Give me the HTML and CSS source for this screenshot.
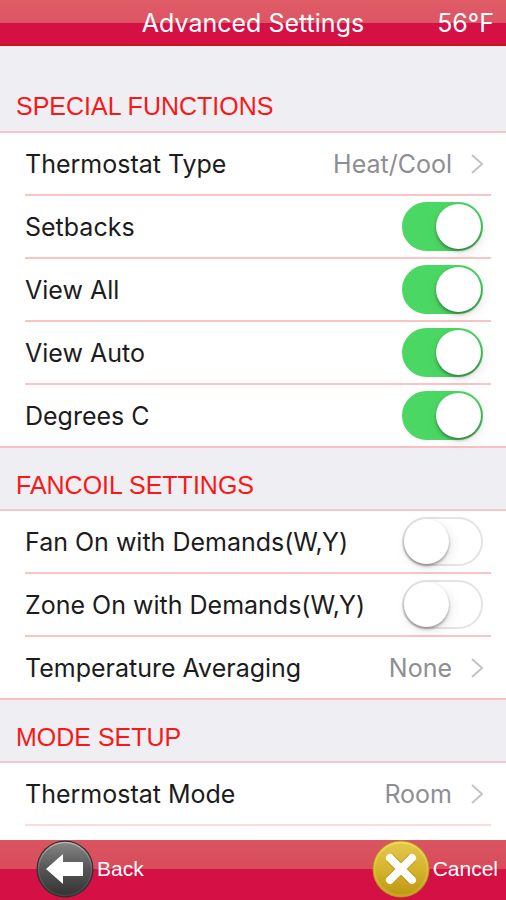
FILE: index.html
```html
<!DOCTYPE html>
<html lang="en">
<head>
<meta charset="utf-8">
<meta name="viewport" content="width=device-width, initial-scale=1">
<title>Advanced Settings</title>
<link rel="stylesheet" href="styles.css">
</head>
<body>
<header class="topbar">
  <h1 class="title">Advanced Settings</h1>
  <span class="temp">56°F</span>
</header>
<main class="settings">
  <section>
    <h2 class="heading heading-first">SPECIAL FUNCTIONS</h2>
    <ul class="list">
      <li><button type="button" class="row"><span class="label">Thermostat Type</span><span class="value">Heat/Cool</span><svg class="chevron" viewBox="0 0 12 20" aria-hidden="true"><path d="M1 1l10 9-10 9"/></svg></button></li>
      <li><label class="row"><span class="label">Setbacks</span><input class="switch" type="checkbox" checked></label></li>
      <li><label class="row"><span class="label">View All</span><input class="switch" type="checkbox" checked></label></li>
      <li><label class="row"><span class="label">View Auto</span><input class="switch" type="checkbox" checked></label></li>
      <li><label class="row"><span class="label">Degrees C</span><input class="switch" type="checkbox" checked></label></li>
    </ul>
  </section>
  <section>
    <h2 class="heading">FANCOIL SETTINGS</h2>
    <ul class="list">
      <li><label class="row"><span class="label">Fan On with Demands(W,Y)</span><input class="switch" type="checkbox"></label></li>
      <li><label class="row"><span class="label">Zone On with Demands(W,Y)</span><input class="switch" type="checkbox"></label></li>
      <li><button type="button" class="row"><span class="label">Temperature Averaging</span><span class="value">None</span><svg class="chevron" viewBox="0 0 12 20" aria-hidden="true"><path d="M1 1l10 9-10 9"/></svg></button></li>
    </ul>
  </section>
  <section>
    <h2 class="heading">MODE SETUP</h2>
    <ul class="list list-open">
      <li><button type="button" class="row"><span class="label">Thermostat Mode</span><span class="value">Room</span><svg class="chevron" viewBox="0 0 12 20" aria-hidden="true"><path d="M1 1l10 9-10 9"/></svg></button></li>
    </ul>
  </section>
</main>
<footer class="toolbar">
  <button type="button" class="action">
    <svg class="badge" viewBox="0 0 58 58" aria-hidden="true">
      <defs>
        <linearGradient id="dark" x1="0" y1="0" x2="0" y2="1"><stop offset="0" stop-color="#858585"/><stop offset=".5" stop-color="#555"/><stop offset="1" stop-color="#343434"/></linearGradient>
        <linearGradient id="dark-rim" x1="0" y1="0" x2="0" y2="1"><stop offset="0" stop-color="#b4b4b4"/><stop offset=".5" stop-color="#666"/><stop offset="1" stop-color="#444"/></linearGradient>
      </defs>
      <circle cx="29" cy="29" r="28.5" fill="#303030"/>
      <circle cx="29" cy="29" r="26.5" fill="url(#dark)" stroke="url(#dark-rim)" stroke-width="1.4"/>
      <path d="M10 29L27 14v8h20v14H27v8z" fill="#fff"/>
    </svg>
    <span>Back</span>
  </button>
  <button type="button" class="action">
    <svg class="badge" viewBox="0 0 58 58" aria-hidden="true">
      <defs>
        <linearGradient id="gold" x1="0" y1="0" x2="0" y2="1"><stop offset="0" stop-color="#e2c84c"/><stop offset=".5" stop-color="#d6b42c"/><stop offset="1" stop-color="#bd9812"/></linearGradient>
        <linearGradient id="gold-rim" x1="0" y1="0" x2="0" y2="1"><stop offset="0" stop-color="#eed85e"/><stop offset="1" stop-color="#c8a520"/></linearGradient>
      </defs>
      <circle cx="29" cy="29" r="28.5" fill="#b8921c"/>
      <circle cx="29" cy="29" r="26.5" fill="url(#gold)" stroke="url(#gold-rim)" stroke-width="2"/>
      <path d="M18 18l22 22M40 18l-22 22" stroke="#a98a20" stroke-width="10" opacity=".5"/>
      <path d="M18 18l22 22M40 18l-22 22" stroke="#fff" stroke-width="8" stroke-linecap="round"/>
    </svg>
    <span>Cancel</span>
  </button>
</footer>
</body>
</html>
```
FILE: styles.css
```css
* {
  box-sizing: border-box;
}

body {
  margin: 0;
  min-height: 100vh;
  display: flex;
  flex-direction: column;
  background: #fff;
  color: #1c1c1c;
  font-family: Inter, "Liberation Sans", sans-serif;
}

button {
  border: 0;
  background: none;
  color: inherit;
  font: inherit;
  text-align: left;
  cursor: pointer;
}

.topbar {
  display: grid;
  grid-template-columns: 1fr auto 1fr;
  align-items: center;
  height: 46px;
  padding: 0 12px;
  background: linear-gradient(#df5c66 0, #dc5563 50%, #d41044 50%, #d41044 96%, #cf1020 96%);
  color: #fff;
  font-size: 25px;
}

.title {
  grid-column: 2;
  margin: 0;
  font-size: inherit;
  font-weight: 400;
}

.temp {
  justify-self: end;
}

.settings {
  flex: 1;
}

.heading {
  height: 63px;
  margin: 0;
  padding: 22px 16px 0;
  background: #efeef3;
  border-bottom: 2px solid #f8c6ca;
  color: #f81818;
  font-family: "Liberation Sans", sans-serif;
  font-size: 25px;
  font-weight: 400;
  line-height: 30px;
}

.heading-first {
  height: 87px;
  padding-top: 45px;
}

.list {
  margin: 0;
  padding: 0;
  list-style: none;
  border-bottom: 2px solid #f8c0c2;
}

.list li {
  margin: 0 15px 0 25px;
  border-bottom: 2px solid #f9c4c4;
}

.list li:last-child {
  border-bottom: 0;
}

.list-open {
  border-bottom: 0;
}

.list-open li:last-child {
  border-bottom: 2px solid #fbdcdc;
}

.row {
  display: flex;
  align-items: center;
  width: 100%;
  height: 61px;
  padding: 0 8px 0 0;
  font-size: 25px;
}

.label {
  flex: 1;
  white-space: nowrap;
}

.value {
  color: #8e8e92;
}

.chevron {
  width: 12px;
  height: 20px;
  margin-left: 19px;
  fill: none;
  stroke: #c4c4c8;
  stroke-width: 2;
}

.switch {
  appearance: none;
  display: flex;
  align-items: center;
  width: 81px;
  height: 49px;
  margin: 0;
  padding: 0;
  border: 2px solid #e4e4e4;
  border-radius: 25px;
  background: #fff;
}

.switch::before {
  content: "";
  width: 45px;
  height: 45px;
  border-radius: 50%;
  background: #fff;
  box-shadow: 0 2px 3px rgba(0, 0, 0, 0.35), 2px 4px 12px rgba(0, 0, 0, 0.1);
}

.switch:checked {
  justify-content: flex-end;
  border-color: #4bd763;
  background: #4bd763;
}

.toolbar {
  position: sticky;
  bottom: 0;
  display: flex;
  justify-content: space-between;
  height: 60px;
  padding: 0 8px 0 36px;
  background: linear-gradient(#da5460 0, #d94c5c 48%, #d41044 48%);
  color: #fff;
  font-family: "Liberation Sans", sans-serif;
  font-size: 21px;
}

.action {
  display: flex;
  align-items: center;
  gap: 3px;
  padding: 0;
  height: 58px;
}

.badge {
  width: 58px;
  height: 58px;
}
```
